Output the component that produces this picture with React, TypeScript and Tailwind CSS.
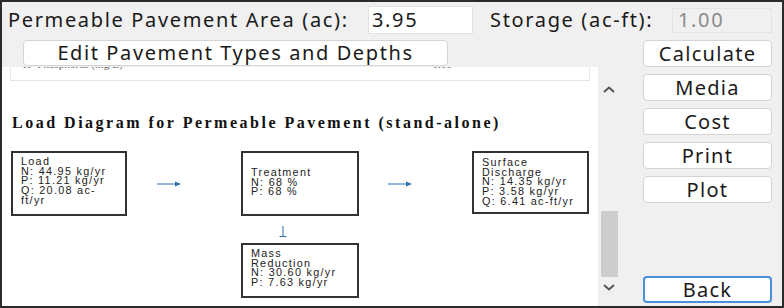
import React from "react";

const ui = { fontFamily: '"Noto Sans", "Open Sans", sans-serif' };
const arial = { fontFamily: '"Liberation Sans", Arial, sans-serif' };
const times = { fontFamily: '"Liberation Serif", "Times New Roman", serif' };

const SideButton = ({ label, primary }: { label: string; primary?: boolean }) => (
  <button
    className={`h-[27px] w-[129px] rounded-[4px] bg-white text-[20px] leading-none tracking-[1.3px] text-[#1a1a1a] ${
      primary ? "border-2 border-[#4a90d9]" : "border border-[#d4d4d4]"
    }`}
    style={ui}
  >
    {label}
  </button>
);

const DiagramBox = ({ lines, className }: { lines: string[]; className: string }) => (
  <div
    className={`border-2 border-[#333] bg-white pl-[8px] text-[10.8px] leading-[9.7px] tracking-[1.3px] text-[#222] ${className}`}
    style={arial}
  >
    {lines.map((l, i) => (
      <div key={i}>{l}</div>
    ))}
  </div>
);

const ArrowRight = () => (
  <svg width="24" height="6" viewBox="0 0 24 6">
    <line x1="0" y1="3" x2="21" y2="3" stroke="#2f6fb0" strokeWidth="1" />
    <path d="M18 0.5 L24 3 L18 5.5 Z" fill="#2f6fb0" />
  </svg>
);

export default function App() {
  return (
    <div className="flex h-[308px] w-[784px] flex-col border-2 border-[#2b2b2b] bg-[#f0f0f0]" style={ui}>
      {/* top row */}
      <div className="flex h-[36px] items-center text-[20px] tracking-[1.65px] text-[#1a1a1a]">
        <span className="ml-[6px] w-[360px] whitespace-nowrap">Permeable Pavement Area (ac):</span>
        <div className="flex h-[28px] w-[105px] items-center border border-[#e2e2e2] bg-white pl-[3px]">3.95</div>
        <span className="ml-[17px] w-[182px] whitespace-nowrap">Storage (ac-ft):</span>
        <div className="flex h-[25px] w-[100px] items-center border border-[#e4e4e4] pl-[5px] text-[#8a8a8a]">1.00</div>
      </div>

      <div className="flex flex-1">
        {/* left area */}
        <div className="flex w-[596px] flex-col">
          <button className="ml-[21px] mt-[2px] h-[26px] w-[425px] whitespace-nowrap rounded-[4px] border border-[#d4d4d4] bg-white text-[20px] leading-none tracking-[1.6px] text-[#1a1a1a]">
            Edit Pavement Types and Depths
          </button>
          <div className="mt-[1px] flex-1 bg-white">
            <div className="mx-[8px] h-[14px] overflow-hidden border-x border-b border-[#e6e6e6]">
              <div className="-mt-[11px] flex text-[11px] text-[#666]" style={times}>
                <span className="ml-[12px]">H- Phosphorus (mg/L)</span>
                <span className="ml-[310px]">0.00</span>
              </div>
            </div>
            <div
              className="ml-[10px] mt-[30px] whitespace-nowrap text-[16px] leading-[24px] font-bold tracking-[2.5px] text-[#111]"
              style={times}
            >
              Load Diagram for Permeable Pavement (stand-alone)
            </div>
            <div className="mt-[16px] flex items-start">
              <DiagramBox
                className="ml-[9px] h-[65px] w-[116px] pt-[4px]"
                lines={["Load", "N: 44.95 kg/yr", "P: 11.21 kg/yr", "Q: 20.08 ac-", "ft/yr"]}
              />
              <div className="ml-[30px] mt-[30px]">
                <ArrowRight />
              </div>
              <div className="ml-[60px] flex flex-col items-center">
                <DiagramBox
                  className="h-[65px] w-[118px] pt-[15px]"
                  lines={["Treatment", "N: 68 %", "P: 68 %"]}
                />
                <svg width="10" height="11" viewBox="0 0 10 11" className="mt-[10px] mb-[6px] -ml-[34px]">
                  <line x1="5" y1="0" x2="5" y2="10" stroke="#2f6fb0" strokeWidth="1" />
                  <line x1="1.5" y1="10.5" x2="8.5" y2="10.5" stroke="#2f6fb0" strokeWidth="1" />
                </svg>
                <DiagramBox
                  className="h-[55px] w-[118px] pt-[4px]"
                  lines={["Mass", "Reduction", "N: 30.60 kg/yr", "P: 7.63 kg/yr"]}
                />
              </div>
              <div className="ml-[29px] mt-[30px]">
                <ArrowRight />
              </div>
              <DiagramBox
                className="ml-[60px] h-[63px] w-[117px] pt-[5px]"
                lines={["Surface", "Discharge", "N: 14.35 kg/yr", "P: 3.58 kg/yr", "Q: 6.41 ac-ft/yr"]}
              />
            </div>
          </div>
        </div>

        {/* scrollbar */}
        <div className="flex w-[22px] flex-col items-center pt-[48px]">
          <svg width="12" height="7" viewBox="0 0 12 7">
            <path d="M1 6 L6 1.5 L11 6" fill="none" stroke="#555" strokeWidth="2" />
          </svg>
          <div className="mt-[118px] h-[66px] w-[17px] bg-[#cdcdcd]" />
          <svg width="12" height="7" viewBox="0 0 12 7" className="mt-[7px]">
            <path d="M1 1 L6 5.5 L11 1" fill="none" stroke="#555" strokeWidth="2" />
          </svg>
        </div>

        {/* right buttons */}
        <div className="ml-[23px] flex flex-col gap-[7px] pt-[2px]">
          <SideButton label="Calculate" />
          <SideButton label="Media" />
          <SideButton label="Cost" />
          <SideButton label="Print" />
          <SideButton label="Plot" />
          <div className="flex-1" />
          <div className="mb-[3px]">
            <SideButton label="Back" primary />
          </div>
        </div>
      </div>
    </div>
  );
}
